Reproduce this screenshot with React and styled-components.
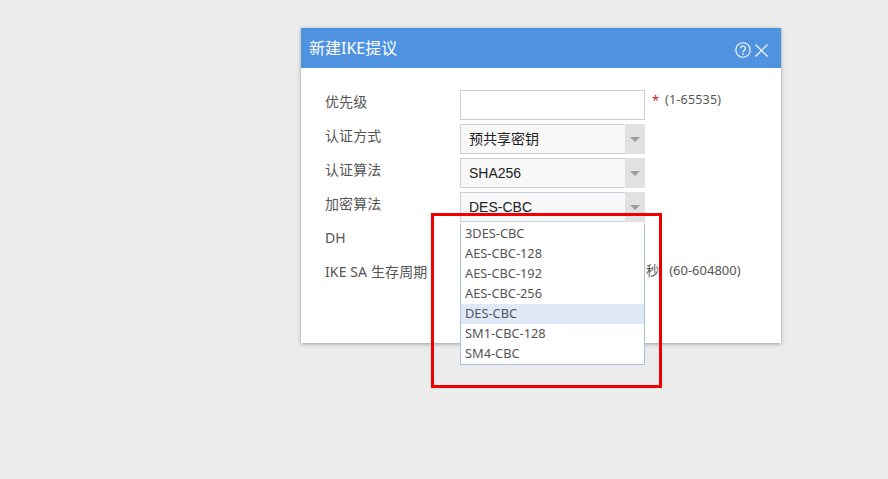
import React from "react";
import styled, { createGlobalStyle } from "styled-components";

const Global = createGlobalStyle`
  html, body { margin: 0; padding: 0; height: 100%; background: #ececec; overflow: hidden; }
  #root { height: 100%; }
  * { box-sizing: border-box; }
`;
const UI_FONT = `"Noto Sans", "Noto Sans CJK SC", sans-serif`;

const Page = styled.div`
  height: 100%;
  padding: 28px 0 0 301px;
  font-family: ${UI_FONT};
  position: relative;
`;
const Dialog = styled.section`
  width: 480px;
  height: 315px;
  background: #fff;
  box-shadow: 0 1px 4px rgba(0, 0, 0, 0.35);
`;
const Header = styled.header`
  height: 40px;
  background: #4f92e0;
  color: #fff;
  display: flex;
  align-items: center;
  justify-content: space-between;
  padding: 0 12px 0 8px;
`;
const Title = styled.h1`
  margin: 0;
  font-size: 16px;
  font-weight: 400;
  line-height: 20px;
`;
const HeaderIcons = styled.div`
  display: flex;
  align-items: center;
  gap: 3px;
  margin-top: 4px;
`;
const Form = styled.div`
  padding: 22px 0 0 24px;
  display: flex;
  flex-direction: column;
  gap: 4px;
`;
const Row = styled.div`
  display: flex;
  align-items: flex-start;
  height: 30px;
`;
const Label = styled.div`
  width: 135px;
  flex: none;
  font-size: 14px;
  line-height: 24px;
  color: #555;
  letter-spacing: 0.12px;
  white-space: nowrap;
`;
const Input = styled.div`
  width: 185px;
  height: 30px;
  flex: none;
  background: #fff;
  border: 1px solid #c9cfdb;
`;
const Select = styled.div`
  width: 185px;
  height: 30px;
  flex: none;
  display: flex;
  background: #f8f8f9;
  border: 1px solid #c9cfdb;
  border-right: 0;
`;
const SelectValue = styled.div`
  flex: 1;
  padding-left: 8px;
  font: 14px/28px "Liberation Sans", "Noto Sans CJK SC", sans-serif;
  color: #222;
`;
const Arrow = styled.div`
  width: 20px;
  margin: -1px 0;
  background: #e1e1e3;
  display: flex;
  align-items: center;
  justify-content: center;
  &::after {
    content: "";
    border-style: solid;
    border-width: 5px 5px 0;
    border-color: #9d9d9f transparent transparent;
    margin-top: 1px;
  }
`;
const Star = styled.span`
  color: #d0121b;
  font-size: 13px;
  line-height: 20px;
  margin-left: 7px;
  width: 13px;
`;
const Hint = styled.span`
  font-size: 12.5px;
  line-height: 20px;
  color: #555;
  letter-spacing: 0.2px;
  white-space: pre;
`;
const HintAfterInput = styled(Hint)`
  margin-left: 1px;
  font-size: 13px;
  letter-spacing: 0;
`;
const Dropdown = styled.ul`
  position: absolute;
  left: 460px;
  top: 223px;
  width: 185px;
  height: 142px;
  margin: 0;
  padding: 0;
  list-style: none;
  background: #fff;
  border: 1px solid #a9bfdc;
  border-top-color: #fff;
`;
const Option = styled.li`
  height: 20px;
  padding-left: 4px;
  font-size: 12.8px;
  line-height: 19px;
  color: #555;
  background: ${(p) => (p.$active ? "#dee8f7" : "transparent")};
`;
const Callout = styled.div`
  position: absolute;
  left: 431px;
  top: 213px;
  width: 231px;
  height: 175px;
  border: 3px solid #f00000;
  pointer-events: none;
`;

const options = ["3DES-CBC", "AES-CBC-128", "AES-CBC-192", "AES-CBC-256", "DES-CBC", "SM1-CBC-128", "SM4-CBC"];

export default function App() {
  return (
    <Page>
      <Global />
      <Dialog>
        <Header>
          <Title>新建IKE提议</Title>
          <HeaderIcons>
            <svg width="16" height="16" viewBox="0 0 16 16" fill="none" stroke="#fff" strokeWidth="1.1">
              <circle cx="8" cy="8" r="7.2" />
              <path d="M5.6 6.2a2.4 2.3 0 1 1 3.7 2c-.9.6-1.3 1-1.3 2" strokeWidth="1.3" />
              <path d="M8 11.3v1.4" strokeWidth="1.4" />
            </svg>
            <svg width="15" height="15" viewBox="0 0 15 15" fill="none" stroke="#fff" strokeWidth="1.2">
              <path d="M1.5 1.5l12 12M13.5 1.5l-12 12" />
            </svg>
          </HeaderIcons>
        </Header>
        <Form>
          <Row>
            <Label>优先级</Label>
            <Input />
            <Star>*</Star>
            <Hint>(1-65535)</Hint>
          </Row>
          <Row>
            <Label>认证方式</Label>
            <Select><SelectValue>预共享密钥</SelectValue><Arrow /></Select>
          </Row>
          <Row>
            <Label>认证算法</Label>
            <Select><SelectValue>SHA256</SelectValue><Arrow /></Select>
          </Row>
          <Row>
            <Label>加密算法</Label>
            <Select><SelectValue>DES-CBC</SelectValue><Arrow /></Select>
          </Row>
          <Row>
            <Label>DH</Label>
            <Select />
          </Row>
          <Row>
            <Label>IKE SA 生存周期</Label>
            <Input />
            <HintAfterInput>秒   (60-604800)</HintAfterInput>
          </Row>
        </Form>
      </Dialog>
      <Dropdown>
        {options.map((o) => (
          <Option key={o} $active={o === "DES-CBC"}>{o}</Option>
        ))}
      </Dropdown>
      <Callout />
    </Page>
  );
}
